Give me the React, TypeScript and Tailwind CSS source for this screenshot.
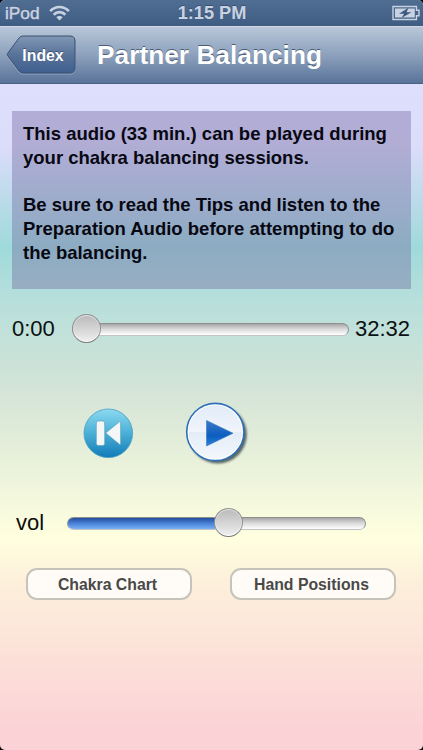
function StatusBar() {
    return (
        <div className="flex h-[26px] items-center justify-between bg-gradient-to-b from-[#506d92] to-[#3f5c83] pl-[5px] pr-[6px] text-[#c8d2e0] [text-shadow:0_-1px_0_#38506f]">
            <div className="flex w-[120px] items-center gap-[9px]">
                <span className="text-[17.3px] leading-[26px] [-webkit-text-stroke:0.5px_#c8d2e0]">iPod</span>
                <svg width="21" height="16" viewBox="0 0 21 16" fill="none" stroke="#c8d2e0" strokeWidth="2.7">
                    <path d="M1.2 6.2C6.4 .6 14.6 .6 19.8 6.2" />
                    <path d="M4.7 9.7C7.9 6.3 13.1 6.3 16.3 9.7" />
                    <path d="M7.3 12.3C9 10.5 12 10.5 13.7 12.3L10.5 15.6Z" fill="#c8d2e0" stroke="none" />
                </svg>
            </div>
            <span className="text-[18.2px] font-bold leading-[26px]">1:15 PM</span>
            <div className="-mr-[3px] flex w-[121px] justify-end">
                <svg width="28" height="16" viewBox="0 0 28 16">
                    <path d="M1 1.5H24.5V5.2H27V10.8H24.5V14.5H1Z" fill="none" stroke="#c8d2e0" strokeWidth="1.4" />
                    <path d="M3 3.5H22.8V12.5H3Z" fill="#c8d2e0" />
                    <path d="M16.5 2.8L7 8.8H12.2L9.5 13L19.5 7.2H14.5Z" fill="#3d587d" />
                </svg>
            </div>
        </div>
    )
}

function NavBar() {
    return (
        <header className="flex h-[58px] items-start border-b border-b-[#4a6084] border-t border-t-[#d0d9e5] bg-gradient-to-b from-[#b8c7d8] via-[#8da1bd] to-[#597399] pl-[6px] pt-[8px]">
            <button className="relative h-[40px] w-[71px] shrink-0">
                <svg className="absolute inset-0" width="71" height="40" viewBox="0 0 71 40">
                    <defs>
                        <linearGradient id="back" x1="0" y1="0" x2="0" y2="1">
                            <stop offset="0" stopColor="#8297b6" />
                            <stop offset=".5" stopColor="#587399" />
                            <stop offset="1" stopColor="#3f5f8f" />
                        </linearGradient>
                    </defs>
                    <path d="M17 1.8H64Q69 1.8 69 7V34Q69 39 64 39H17Q14.5 39 13 37L1.5 21.5Q.8 20.6 1.5 19.6L13 4Q14.5 1.8 17 1.8Z" fill="none" stroke="#b1c0d2" strokeOpacity=".6" />
                    <path d="M17 1H64Q69 1 69 6V33Q69 38 64 38H17Q14.5 38 13 36L1.5 20.5Q.8 19.6 1.5 18.6L13 3Q14.5 1 17 1Z" fill="url(#back)" stroke="#39506f" />
                </svg>
                <span className="relative ml-[3px] block text-[15.8px] font-bold leading-[39px] text-white [text-shadow:0_-1px_0_#384f73]">Index</span>
            </button>
            <h1 className="ml-[20px] whitespace-nowrap text-[26.3px] font-bold leading-[40px] text-white [text-shadow:0_-1px_0_#4b5d76]">Partner Balancing</h1>
        </header>
    )
}

function Slider({ value, className }: { value: number; className: string }) {
    return (
        <div className={`relative h-[30px] ${className}`}>
            <div className="mt-[9px] h-[13px] overflow-hidden rounded-full border border-[#8f8f8f] border-b-[#c4c4c4] bg-gradient-to-b from-[#a8a8a8] via-[#d8d8d8] via-45% to-white">
                <div className="h-full bg-gradient-to-b from-[#244f9d] via-[#4a82d8] to-[#79b0f6]" style={{ width: value + "px" }} />
            </div>
            <div
                className="absolute top-0 size-[29px] rounded-full border border-[#929292] border-b-[#777] bg-gradient-to-b from-[#b9b9b9] to-[#f0f0f0] shadow-[inset_0_1px_1px_#e8e8e8,inset_0_-1px_1px_#fff]"
                style={{ left: value + "px" }}
            />
        </div>
    )
}

function LinkButton({ text }: { text: string }) {
    return (
        <button className="h-[32px] w-[166px] rounded-[11px] border-2 border-[#c6c3bb] bg-[#fffcf7] pr-[3px] text-[15.8px] font-bold leading-[29px] text-[#494949]">
            {text}
        </button>
    )
}

export default function App() {
    return (
        <div className="bg-black">
            <div className="h-[750px] w-[423px] overflow-hidden rounded-[5px] bg-[linear-gradient(to_bottom,#dedefd_84px,#dcdcfb_146px,#9fdadb_247px,#b7dfdb_300px,#d4e4d7_391px,#ffffdf_538px,#fdf0db_580px,#fbd2d6_732px)] font-['Liberation_Sans',Arial,sans-serif]">
                <StatusBar />
                <NavBar />
                <main>
                    <section className="mx-[12px] mt-[27px] h-[178px] bg-[#70679e]/40 pl-[11px] pt-[11px] text-[18.5px] font-bold leading-[23.8px] text-[#080812]">
                        <p>
                            This audio (33 min.) can be played during
                            <br />
                            your chakra balancing sessions.
                        </p>
                        <p className="mt-[23.8px]">
                            Be sure to read the Tips and listen to the
                            <br />
                            Preparation Audio before attempting to do
                            <br />
                            the balancing.
                        </p>
                    </section>
                    <div className="mt-[25px] flex h-[30px] items-center pl-[12px] text-[22px] text-[#0b1010]">
                        <span className="w-[60px] leading-[30px]">0:00</span>
                        <Slider value={0} className="w-[277px]" />
                        <span className="ml-[6px] leading-[30px]">32:32</span>
                    </div>
                    <div className="mt-[57px] flex h-[64px] items-center pl-[82px]">
                        <svg width="52" height="54" viewBox="0 0 52 54">
                            <defs>
                                <linearGradient id="prev" x1="0" y1="0" x2="0" y2="1">
                                    <stop offset="0" stopColor="#8cdaf0" />
                                    <stop offset=".5" stopColor="#4aafd6" />
                                    <stop offset="1" stopColor="#127bb8" />
                                </linearGradient>
                            </defs>
                            <circle cx="26.3" cy="27.3" r="24.3" fill="url(#prev)" stroke="#4a9fc0" strokeWidth=".8" />
                            <rect x="14.3" y="15" width="8.4" height="24.5" rx="2" fill="#f4f6f7" stroke="#5da4bc" strokeWidth=".7" />
                            <path d="M23.7 27L37.5 15.7Q38.6 15 38.6 16.2V37.8Q38.6 39 37.5 38.3Z" fill="#f4f6f7" stroke="#5da4bc" strokeWidth=".7" />
                        </svg>
                        <svg className="ml-[50px]" width="66" height="66" viewBox="0 0 66 66">
                            <defs>
                                <linearGradient id="disc" x1="0" y1="0" x2="0" y2="1">
                                    <stop offset="0" stopColor="#e2ecf8" />
                                    <stop offset=".5" stopColor="#f0f4fb" />
                                    <stop offset=".51" stopColor="#e3ecf7" />
                                    <stop offset="1" stopColor="#f3f7fc" />
                                </linearGradient>
                                <linearGradient id="arrow" x1="0" y1="0" x2="0" y2="1">
                                    <stop offset="0" stopColor="#3c78c7" />
                                    <stop offset=".6" stopColor="#0b5dc0" />
                                    <stop offset="1" stopColor="#2b83d6" />
                                </linearGradient>
                                <filter id="soft">
                                    <feGaussianBlur stdDeviation="1" />
                                </filter>
                            </defs>
                            <circle cx="33.8" cy="34.5" r="29" fill="#35454a" fillOpacity=".8" filter="url(#soft)" />
                            <circle cx="31.3" cy="32" r="28.6" fill="#fff" stroke="#2e70ba" strokeWidth="1.6" />
                            <circle cx="31.3" cy="32" r="26.8" fill="url(#disc)" />
                            <path d="M22.5 20.5L49 33.2L22.5 46Z" fill="url(#arrow)" stroke="#3877bd" strokeWidth=".6" />
                        </svg>
                    </div>
                    <div className="mt-[43px] flex h-[30px] items-center pl-[16px] text-[22px] text-[#0d0d0a]">
                        <span className="w-[51px] leading-[30px]">vol</span>
                        <Slider value={147} className="w-[299px]" />
                    </div>
                    <div className="mt-[30px] flex gap-[38px] pl-[26px]">
                        <LinkButton text="Chakra Chart" />
                        <LinkButton text="Hand Positions" />
                    </div>
                </main>
            </div>
        </div>
    )
}
